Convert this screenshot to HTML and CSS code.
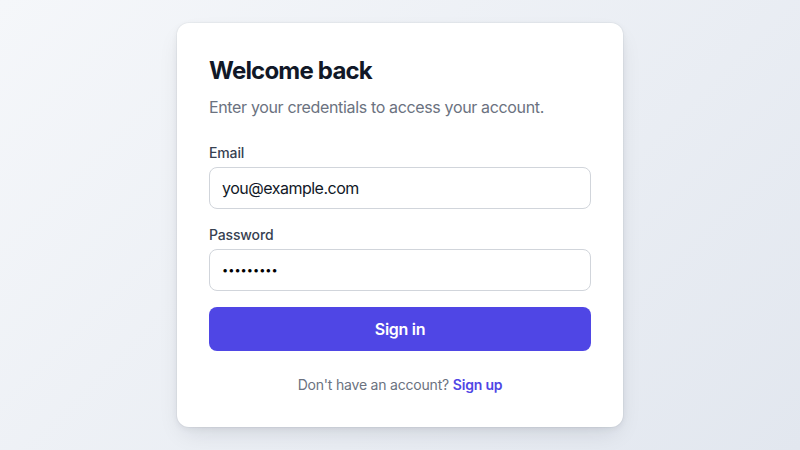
FILE: index.html
```html
<!DOCTYPE html>
<html lang="en">
<head>
<meta charset="utf-8">
<title>Sign in</title>
<link rel="stylesheet" href="styles.css">
</head>
<body>
<main class="page">
  <section class="card">
    <h1 class="title">Welcome back</h1>
    <p class="subtitle">Enter your credentials to access your account.</p>
    <form class="form">
      <div class="field">
        <label class="label" for="email">Email</label>
        <input class="input" id="email" type="email" value="you@example.com">
      </div>
      <div class="field">
        <label class="label" for="password">Password</label>
        <input class="input input-password" id="password" type="password" value="secret123">
      </div>
      <button class="button" type="button">Sign in</button>
    </form>
    <p class="footer">Don't have an account? <a class="link" href="#">Sign up</a></p>
  </section>
</main>
</body>
</html>
```

FILE: styles.css
```css
* { box-sizing: border-box; }
html, body {
  margin: 0;
  height: 100%;
}
body {
  font-family: Inter, "Liberation Sans", sans-serif;
  background: linear-gradient(135deg, #f5f7fa 0%, #e2e7ef 100%);
  color: #111827;
}
.page {
  height: 450px;
  display: flex;
  align-items: center;
  justify-content: center;
}
.card {
  width: 446px;
  background: #ffffff;
  border-radius: 12px;
  padding: 32px;
  box-shadow: 0 10px 24px -6px rgba(15, 23, 42, 0.12), 0 2px 6px rgba(15, 23, 42, 0.06), 0 0 0 1px rgba(15, 23, 42, 0.03);
}
.title {
  margin: 0;
  font-size: 24px;
  line-height: 32px;
  font-weight: 700;
  color: #111827;
  letter-spacing: -0.8px;
}
.subtitle {
  margin: 8px 0 0;
  font-size: 16px;
  line-height: 24px;
  color: #6b7280;
  letter-spacing: -0.35px;
}
.form {
  margin-top: 24px;
  display: flex;
  flex-direction: column;
  gap: 16px;
}
.field {
  display: flex;
  flex-direction: column;
  gap: 4px;
}
.label {
  font-size: 14px;
  line-height: 20px;
  font-weight: 500;
  color: #374151;
  letter-spacing: -0.15px;
}
.input {
  height: 42px;
  width: 100%;
  border: 1px solid #d1d5db;
  border-radius: 8px;
  padding: 0 12px;
  font-family: Inter, "Liberation Sans", sans-serif;
  font-size: 16px;
  letter-spacing: -0.5px;
  color: #111827;
  background: #ffffff;
  outline: none;
}
.input-password {
  font-size: 11px;
  letter-spacing: 0;
  color: #000000;
}
.button {
  height: 44px;
  width: 100%;
  border: none;
  border-radius: 8px;
  background: #4f46e5;
  color: #ffffff;
  font-family: Inter, "Liberation Sans", sans-serif;
  font-size: 16px;
  font-weight: 600;
  letter-spacing: -0.3px;
  cursor: pointer;
}
.footer {
  margin: 24px 0 0;
  text-align: center;
  font-size: 14px;
  line-height: 20px;
  color: #6b7280;
  letter-spacing: -0.2px;
}
.link {
  color: #4f46e5;
  font-weight: 600;
  text-decoration: none;
}
```
